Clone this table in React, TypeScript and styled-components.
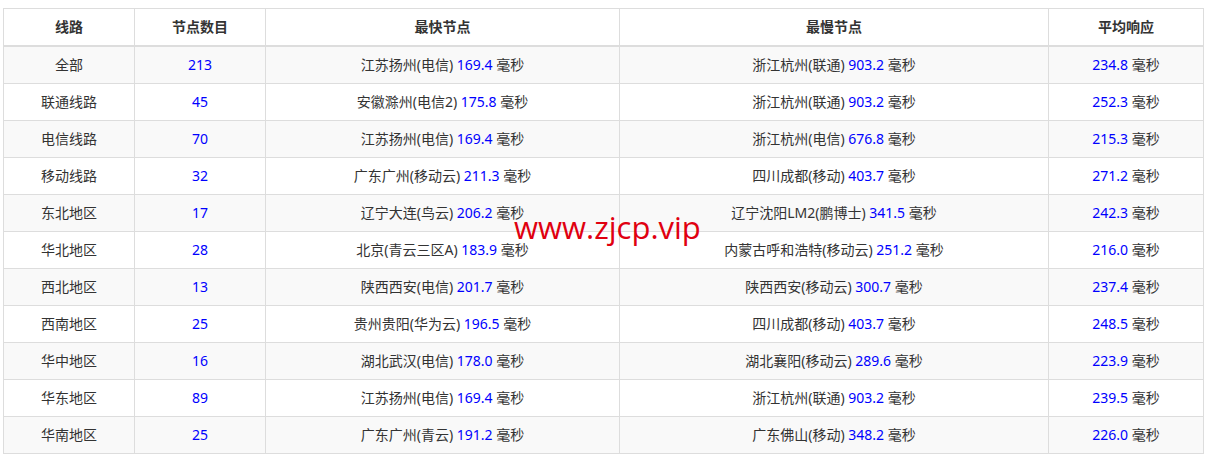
import React from "react";
import styled, { createGlobalStyle } from "styled-components";

const Global = createGlobalStyle`
  html, body { margin: 0; padding: 0; background: #fff; }
  body { font-family: "Noto Sans", "Noto Sans CJK SC", sans-serif; }
`;

const Page = styled.div`
  position: relative;
  padding: 8px 0 0 3px;
`;

const Table = styled.table`
  width: 1200px;
  border-collapse: collapse;
  table-layout: fixed;
  font-size: 14px;
  color: #333;
`;

const Th = styled.th`
  height: 36px;
  padding: 0;
  border: 1px solid #ddd;
  border-bottom: 2px solid #ddd;
  font-weight: bold;
  text-align: center;
  line-height: 20px;
  background: #fff;
`;

const Row = styled.tr<{ $striped: boolean }>`
  background: ${(p) => (p.$striped ? "#f9f9f9" : "#fff")};
`;

const Td = styled.td`
  height: 36px;
  padding: 0;
  border: 1px solid #ddd;
  text-align: center;
  line-height: 20px;
`;

const Num = styled.span`
  color: #0000ff;
`;

const Watermark = styled.div`
  position: absolute;
  left: 514px;
  top: 207px;
  font-family: "Open Sans", "Liberation Sans", sans-serif;
  font-size: 31px;
  line-height: 40px;
  color: #e00010;
  pointer-events: none;
`;

type R = [string, string, string, string, string, string, string];
const rows: R[] = [
  ["全部", "213", "江苏扬州(电信)", "169.4", "浙江杭州(联通)", "903.2", "234.8"],
  ["联通线路", "45", "安徽滁州(电信2)", "175.8", "浙江杭州(联通)", "903.2", "252.3"],
  ["电信线路", "70", "江苏扬州(电信)", "169.4", "浙江杭州(电信)", "676.8", "215.3"],
  ["移动线路", "32", "广东广州(移动云)", "211.3", "四川成都(移动)", "403.7", "271.2"],
  ["东北地区", "17", "辽宁大连(鸟云)", "206.2", "辽宁沈阳LM2(鹏博士)", "341.5", "242.3"],
  ["华北地区", "28", "北京(青云三区A)", "183.9", "内蒙古呼和浩特(移动云)", "251.2", "216.0"],
  ["西北地区", "13", "陕西西安(电信)", "201.7", "陕西西安(移动云)", "300.7", "237.4"],
  ["西南地区", "25", "贵州贵阳(华为云)", "196.5", "四川成都(移动)", "403.7", "248.5"],
  ["华中地区", "16", "湖北武汉(电信)", "178.0", "湖北襄阳(移动云)", "289.6", "223.9"],
  ["华东地区", "89", "江苏扬州(电信)", "169.4", "浙江杭州(联通)", "903.2", "239.5"],
  ["华南地区", "25", "广东广州(青云)", "191.2", "广东佛山(移动)", "348.2", "226.0"],
];

export default function App() {
  return (
    <Page>
      <Global />
      <Table>
        <colgroup>
          <col style={{ width: 131 }} />
          <col style={{ width: 131 }} />
          <col style={{ width: 354 }} />
          <col style={{ width: 429 }} />
          <col style={{ width: 155 }} />
        </colgroup>
        <thead>
          <tr>
            <Th>线路</Th>
            <Th>节点数目</Th>
            <Th>最快节点</Th>
            <Th>最慢节点</Th>
            <Th>平均响应</Th>
          </tr>
        </thead>
        <tbody>
          {rows.map((r, i) => (
            <Row key={i} $striped={i % 2 === 0}>
              <Td>{r[0]}</Td>
              <Td>
                <Num>{r[1]}</Num>
              </Td>
              <Td>
                {r[2]} <Num>{r[3]}</Num> 毫秒
              </Td>
              <Td>
                {r[4]} <Num>{r[5]}</Num> 毫秒
              </Td>
              <Td>
                <Num>{r[6]}</Num> 毫秒
              </Td>
            </Row>
          ))}
        </tbody>
      </Table>
      <Watermark>www.zjcp.vip</Watermark>
    </Page>
  );
}
